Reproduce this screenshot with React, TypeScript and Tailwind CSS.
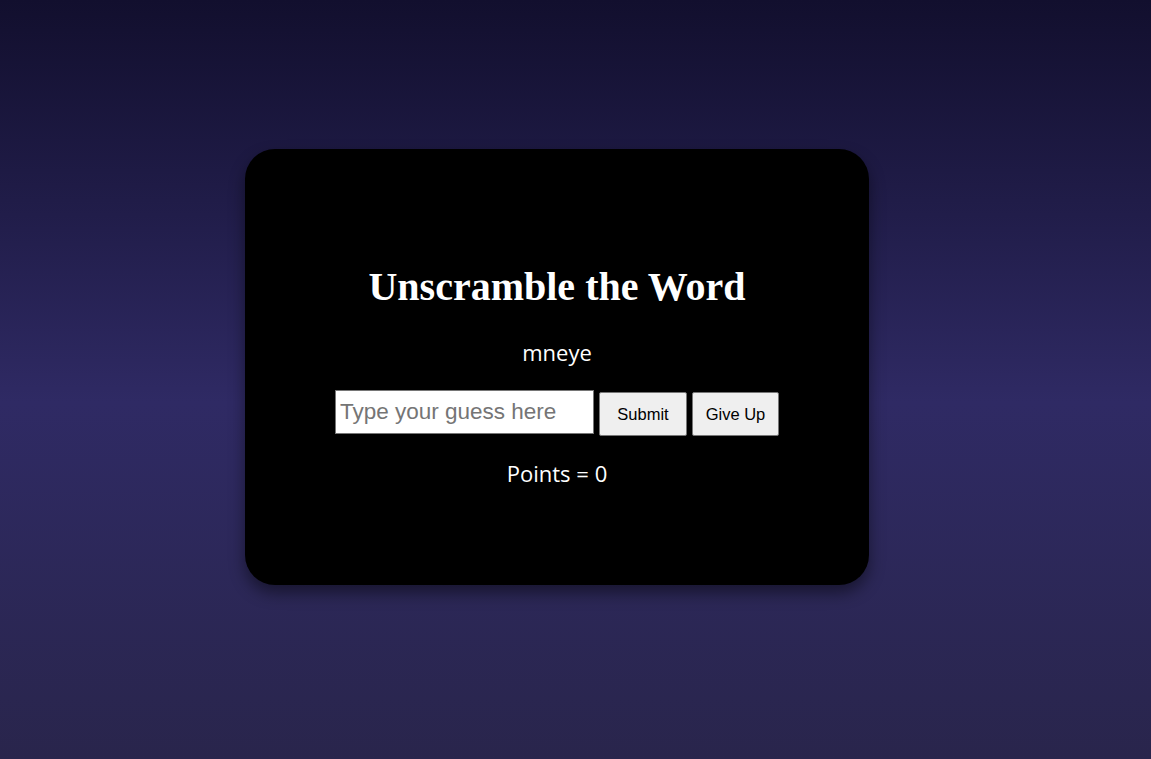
import React, { useState } from 'react';

export default function App() {
  const [guess, setGuess] = useState('');
  const [points] = useState(0);

  return (
    <div className="min-h-screen w-full bg-gradient-to-b from-[#120f2e] via-[#2f2a64] via-[53%] to-[#29254c] pt-[149px] pl-[245px]">
      <div className="w-[624px] h-[436px] rounded-[30px] bg-black shadow-[0_8px_16px_rgba(0,0,0,0.45)] flex flex-col items-center pt-[112px]">
        <h1 className="font-['Liberation_Serif',serif] font-bold text-[40px] leading-[52px] text-white">
          Unscramble the Word
        </h1>

        <p className="mt-[24px] font-['Open_Sans',sans-serif] text-[22px] leading-[30px] text-white">mneye</p>

        <div className="mt-[23px] flex items-start gap-[5px] font-['Liberation_Sans',Arial,sans-serif]">
          <input
            value={guess}
            onChange={(e) => setGuess(e.target.value)}
            placeholder="Type your guess here"
            className="w-[259px] h-[44px] bg-white border border-[#767676] px-[4px] text-[22.5px] text-black placeholder:text-[#757575] outline-none"
          />
          <button className="mt-[2px] w-[88px] h-[44px] bg-[#efefef] border border-[#767676] rounded-[2px] text-[16.5px] text-black">
            Submit
          </button>
          <button className="mt-[2px] w-[87px] h-[44px] bg-[#efefef] border border-[#767676] rounded-[2px] text-[16.5px] text-black">
            Give Up
          </button>
        </div>

        <p className="mt-[22px] font-['Open_Sans',sans-serif] text-[22px] leading-[30px] text-white">
          Points = {points}
        </p>
      </div>
    </div>
  );
}
